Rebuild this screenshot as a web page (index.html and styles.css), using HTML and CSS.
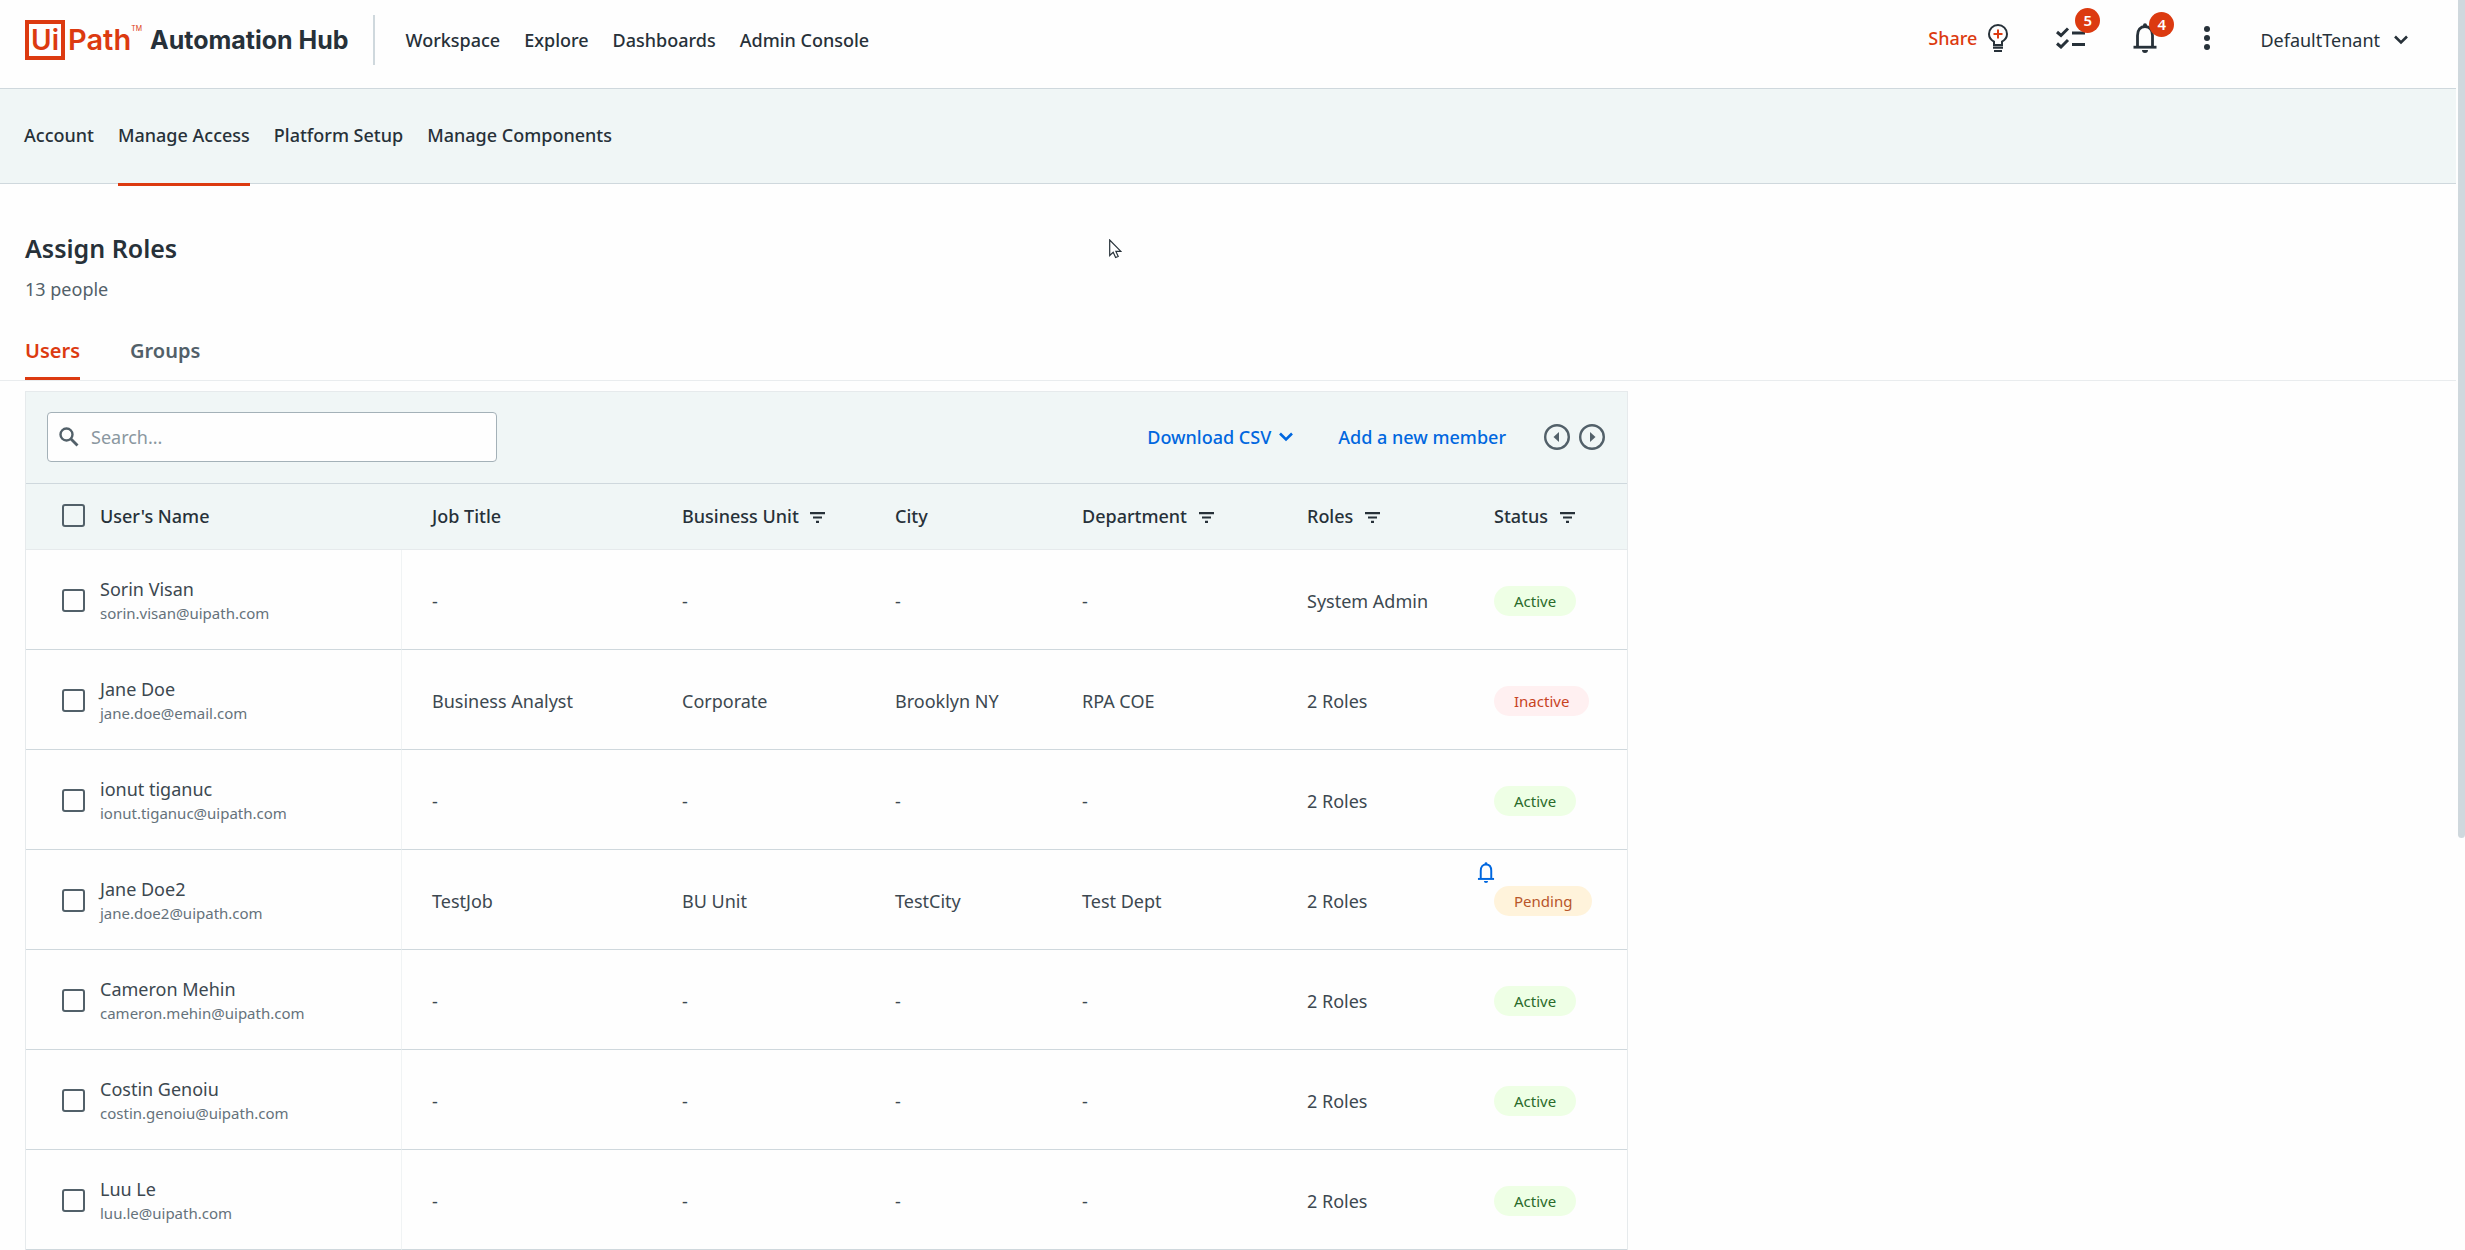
FILE: index.html
```html
<!DOCTYPE html>
<html lang="en">
<head>
    <meta charset="UTF-8">
    <meta name="viewport" content="width=device-width, initial-scale=1.0">
    <title>Automation Hub - Assign Roles</title>
    <link rel="stylesheet" href="styles.css">
</head>
<body>

    <!-- shared icons -->
    <svg class="sprite" aria-hidden="true">
        <symbol id="chevron" viewBox="0 0 14 10">
            <path d="M1 1.5l6 6 6-6" fill="none" stroke="currentColor" stroke-width="2.6"/>
        </symbol>
        <symbol id="filter" viewBox="0 0 15 11">
            <path d="M0 1.1h15M3 5.5h9M6 9.9h3" fill="none" stroke="currentColor" stroke-width="2.2"/>
        </symbol>
        <symbol id="bell" viewBox="0 0 24 30">
            <path d="M4.500 23V12.500C4.500 7 7.500 3.500 12 3.500S19.500 7 19.500 12.500V23" fill="none" stroke="currentColor" stroke-width="2.8"/>
            <path d="M.5 24.200h23" stroke="currentColor" stroke-width="2.8"/>
            <path d="M10 4V2.200a2 2 0 0 1 4 0V4zM9 27h6a3 3 0 0 1-6 0z" fill="currentColor"/>
        </symbol>
    </svg>

    <header class="topbar">
        <a class="logo" href="#">
            <span class="logo-box">Ui</span><span class="logo-path">Path</span><sup class="logo-tm">TM</sup>
            <span class="logo-product">Automation Hub</span>
        </a>
        <nav class="main-nav">
            <a href="#">Workspace</a>
            <a href="#">Explore</a>
            <a href="#">Dashboards</a>
            <a href="#">Admin Console</a>
        </nav>
        <div class="tools">
            <a class="share" href="#">Share
                <svg width="22" height="30" viewBox="0 0 22 30">
                    <path d="M7 22v-3.300C4 17 2 14.500 2 11a9 9 0 0 1 18 0c0 3.500-2 6-5 7.700V22z" fill="none" stroke="#273139" stroke-width="2"/>
                    <path d="M6 24.700h10M7 28h8" stroke="#273139" stroke-width="2.2"/>
                    <path d="M11 6.500v9M6.500 11h9" stroke="#dc3a10" stroke-width="2"/>
                </svg>
            </a>
            <button class="icon-button tasks" aria-label="Tasks">
                <svg width="30" height="22" viewBox="0 0 30 22">
                    <path d="M1 5l4 3.500 7-7M1 16.500L5 20l7-7M16 6h13M16 17.500h13" fill="none" stroke="currentColor" stroke-width="3"/>
                </svg>
                <span class="count">5</span>
            </button>
            <button class="icon-button alerts" aria-label="Notifications">
                <svg width="24" height="30"><use href="#bell"/></svg>
                <span class="count">4</span>
            </button>
            <button class="icon-button more" aria-label="More">
                <svg width="8" height="24" viewBox="0 0 8 24" fill="currentColor">
                    <circle cx="4" cy="3" r="3"/><circle cx="4" cy="12" r="3"/><circle cx="4" cy="21" r="3"/>
                </svg>
            </button>
            <button class="tenant">DefaultTenant
                <svg width="14" height="10"><use href="#chevron"/></svg>
            </button>
        </div>
    </header>

    <nav class="sub-nav">
        <a href="#">Account</a>
        <a class="active" href="#">Manage Access</a>
        <a href="#">Platform Setup</a>
        <a href="#">Manage Components</a>
    </nav>

    <main>
        <div class="page-title">
            <h1>Assign Roles</h1>
            <p>13 people</p>
        </div>

        <div class="tabs">
            <button class="tab active">Users</button>
            <button class="tab">Groups</button>
        </div>

        <section class="panel">
            <div class="toolbar">
                <label class="search">
                    <svg width="20" height="20" viewBox="0 0 20 20">
                        <circle cx="7.500" cy="7.500" r="6" fill="none" stroke="currentColor" stroke-width="2.400"/>
                        <path d="M12 12l6.500 6.500" stroke="currentColor" stroke-width="2.800"/>
                    </svg>
                    <input type="text" placeholder="Search..." aria-label="Search">
                </label>
                <button class="link-button download">Download CSV
                    <svg width="14" height="10"><use href="#chevron"/></svg>
                </button>
                <button class="link-button">Add a new member</button>
                <div class="pager">
                    <button class="icon-button" aria-label="Previous">
                        <svg width="26" height="26" viewBox="0 0 26 26">
                            <circle cx="13" cy="13" r="11.800" fill="none" stroke="currentColor" stroke-width="2.400"/>
                            <path d="M15 8v10l-5.500-5z" fill="currentColor"/>
                        </svg>
                    </button>
                    <button class="icon-button" aria-label="Next">
                        <svg width="26" height="26" viewBox="0 0 26 26">
                            <circle cx="13" cy="13" r="11.800" fill="none" stroke="currentColor" stroke-width="2.400"/>
                            <path d="M11 8v10l5.500-5z" fill="currentColor"/>
                        </svg>
                    </button>
                </div>
            </div>

            <table>
                <colgroup>
                    <col class="col-name">
                    <col class="col-job">
                    <col class="col-unit">
                    <col class="col-city">
                    <col class="col-dept">
                    <col class="col-roles">
                    <col>
                </colgroup>
                <thead>
                    <tr>
                        <th><label class="user"><input type="checkbox"><span>User's Name</span></label></th>
                        <th>Job Title</th>
                        <th>Business Unit <svg class="filter" width="15" height="11"><use href="#filter"/></svg></th>
                        <th>City</th>
                        <th>Department <svg class="filter" width="15" height="11"><use href="#filter"/></svg></th>
                        <th>Roles <svg class="filter" width="15" height="11"><use href="#filter"/></svg></th>
                        <th>Status <svg class="filter" width="15" height="11"><use href="#filter"/></svg></th>
                    </tr>
                </thead>
                <tbody>
                    <tr>
                        <td><label class="user"><input type="checkbox"><span>Sorin Visan<small>sorin.visan@uipath.com</small></span></label></td>
                        <td>-</td>
                        <td>-</td>
                        <td>-</td>
                        <td>-</td>
                        <td>System Admin</td>
                        <td><span class="status">Active</span></td>
                    </tr>
                    <tr>
                        <td><label class="user"><input type="checkbox"><span>Jane Doe<small>jane.doe@email.com</small></span></label></td>
                        <td>Business Analyst</td>
                        <td>Corporate</td>
                        <td>Brooklyn NY</td>
                        <td>RPA COE</td>
                        <td>2 Roles</td>
                        <td><span class="status inactive">Inactive</span></td>
                    </tr>
                    <tr>
                        <td><label class="user"><input type="checkbox"><span>ionut tiganuc<small>ionut.tiganuc@uipath.com</small></span></label></td>
                        <td>-</td>
                        <td>-</td>
                        <td>-</td>
                        <td>-</td>
                        <td>2 Roles</td>
                        <td><span class="status">Active</span></td>
                    </tr>
                    <tr>
                        <td><label class="user"><input type="checkbox"><span>Jane Doe2<small>jane.doe2@uipath.com</small></span></label></td>
                        <td>TestJob</td>
                        <td>BU Unit</td>
                        <td>TestCity</td>
                        <td>Test Dept</td>
                        <td>2 Roles</td>
                        <td><span class="status pending">Pending<svg class="remind" width="18" height="21"><use href="#bell"/></svg></span></td>
                    </tr>
                    <tr>
                        <td><label class="user"><input type="checkbox"><span>Cameron Mehin<small>cameron.mehin@uipath.com</small></span></label></td>
                        <td>-</td>
                        <td>-</td>
                        <td>-</td>
                        <td>-</td>
                        <td>2 Roles</td>
                        <td><span class="status">Active</span></td>
                    </tr>
                    <tr>
                        <td><label class="user"><input type="checkbox"><span>Costin Genoiu<small>costin.genoiu@uipath.com</small></span></label></td>
                        <td>-</td>
                        <td>-</td>
                        <td>-</td>
                        <td>-</td>
                        <td>2 Roles</td>
                        <td><span class="status">Active</span></td>
                    </tr>
                    <tr>
                        <td><label class="user"><input type="checkbox"><span>Luu Le<small>luu.le@uipath.com</small></span></label></td>
                        <td>-</td>
                        <td>-</td>
                        <td>-</td>
                        <td>-</td>
                        <td>2 Roles</td>
                        <td><span class="status">Active</span></td>
                    </tr>
                </tbody>
            </table>
        </section>
    </main>

    <div class="scroll-thumb"></div>
    <svg class="pointer" width="13" height="20" viewBox="0 0 13 20">
        <path d="M.7 1v15.500l3.500-3.300 2.400 5.300 2.600-1.100-2.300-5h5z" fill="#fff" stroke="#273139" stroke-width="1.200"/>
    </svg>

</body>
</html>
```
FILE: styles.css
```css
* {
    box-sizing: border-box;
}
body {
    margin: 0;
    padding-right: 9px;
    font-family: "Noto Sans", sans-serif;
    font-size: 18px;
    line-height: 24px;
    color: #273139;
    background-color: #fefefe;
}
a {
    color: inherit;
    text-decoration: none;
}
button {
    padding: 0;
    border: none;
    background: none;
    font: inherit;
    color: inherit;
    cursor: pointer;
}
svg {
    display: block;
}
.sprite {
    position: absolute;
    width: 0;
    height: 0;
}

/* top bar */
.topbar {
    display: flex;
    align-items: center;
    height: 89px;
    padding: 0 48px 8px 25px;
    border-bottom: 1px solid #cfd8dd;
}
.logo {
    display: flex;
    align-items: center;
    height: 50px;
    padding-right: 24px;
    border-right: 2px solid #cfd8dd;
    font-family: Inter, sans-serif;
    font-weight: 600;
}
.logo-box {
    width: 40px;
    height: 40px;
    border: 4px solid #dc3a10;
    font-size: 28px;
    line-height: 32px;
    text-align: center;
    color: #dc3a10;
}
.logo-path {
    margin-left: 3px;
    font-size: 29px;
    color: #dc3a10;
}
.logo-tm {
    margin: 2px 0 0;
    align-self: flex-start;
    font-size: 7px;
    font-weight: 400;
    color: #dc3a10;
}
.logo-product {
    margin-left: 8px;
    font-size: 25px;
    font-weight: 700;
}
.main-nav {
    display: flex;
    gap: 24px;
    margin-left: 31px;
    font-weight: 500;
}
.tools {
    display: flex;
    align-items: center;
    margin-left: auto;
}
.share {
    display: flex;
    align-items: center;
    gap: 10px;
    margin-bottom: 4px;
    font-weight: 500;
    color: #dc3a10;
}
.icon-button {
    position: relative;
}
.tools .icon-button {
    margin-bottom: 4px;
}
.tasks {
    margin-left: 47px;
}
.alerts {
    margin-left: 47px;
}
.more {
    margin-left: 46px;
}
.count {
    position: absolute;
    top: -19px;
    right: -14px;
    width: 25px;
    height: 25px;
    border-radius: 50%;
    background-color: #dc3a10;
    font-size: 15px;
    font-weight: 600;
    line-height: 25px;
    text-align: center;
    color: #fff;
}
.alerts .count {
    top: -11px;
    right: -17px;
}
.tenant {
    display: flex;
    align-items: center;
    gap: 14px;
    margin-left: 49px;
}

/* second level navigation */
.sub-nav {
    display: flex;
    gap: 24px;
    height: 95px;
    padding-left: 24px;
    border-bottom: 1px solid #cfd8dd;
    background-color: #f0f6f6;
    font-weight: 500;
    line-height: 92px;
}
.sub-nav a {
    height: 97px;
}
.sub-nav .active {
    border-bottom: 3px solid #dc3a10;
}

/* page title and tabs */
.page-title {
    padding: 46px 25px 0;
}
h1 {
    margin: 0;
    font-size: 25px;
    font-weight: 600;
    line-height: 36px;
}
.page-title p {
    margin: 11px 0 0;
    color: #526069;
}
.tabs {
    display: flex;
    gap: 50px;
    height: 80px;
    padding: 24px 25px 0;
    border-bottom: 1px solid #e9ecee;
    font-size: 20px;
}
.tab {
    border-bottom: 3px solid transparent;
    font-weight: 600;
    color: #526069;
}
.tab.active {
    border-color: #dc3a10;
    color: #dc3a10;
}

/* users table */
.panel {
    max-width: 1603px;
    margin: 10px 25px 0;
    border: 1px solid #e6eaec;
    border-bottom: none;
}
.toolbar {
    display: flex;
    align-items: center;
    height: 92px;
    padding: 0 22px 2px 21px;
    border-bottom: 1px solid #cfd8dd;
    background-color: #f0f6f6;
}
.search {
    display: flex;
    align-items: center;
    gap: 10px;
    width: 450px;
    height: 50px;
    margin-right: auto;
    padding: 0 11px;
    border: 1px solid #a4b1b8;
    border-radius: 4px;
    background-color: #fefefe;
    color: #526069;
}
.search input {
    flex: 1;
    border: none;
    outline: none;
    background: none;
    font: inherit;
}
.search input::placeholder {
    color: #8a97a0;
}
.link-button {
    font-weight: 500;
    color: #0067df;
}
.download {
    display: flex;
    align-items: center;
    gap: 8px;
    margin-right: 45px;
}
.pager {
    display: flex;
    gap: 9px;
    margin-left: 38px;
    color: #526069;
}
table {
    width: 100%;
    border-collapse: separate;
    border-spacing: 0;
    table-layout: fixed;
}
.col-name { width: 376px; }
.col-job { width: 250px; }
.col-unit { width: 213px; }
.col-city { width: 187px; }
.col-dept { width: 225px; }
.col-roles { width: 187px; }
th, td {
    padding: 0 0 0 30px;
    text-align: left;
    white-space: nowrap;
}
th {
    height: 66px;
    padding-bottom: 2px;
    border-bottom: 1px solid #e6eaec;
    background-color: #f0f6f6;
    font-weight: 500;
}
td {
    height: 100px;
    padding-top: 2px;
    border-bottom: 1px solid #cfd8dd;
    color: #3c4850;
}
th:first-child, td:first-child {
    padding-left: 36px;
}
td:first-child {
    border-right: 1px solid #f0f3f4;
}
.user {
    display: flex;
    align-items: center;
    gap: 15px;
}
.user input {
    appearance: none;
    width: 23px;
    height: 23px;
    margin: 0;
    border: 2px solid #526069;
    border-radius: 3px;
}
.user small {
    display: block;
    font-size: 15px;
    color: #65727b;
}
.filter {
    display: inline-block;
    margin-left: 7px;
}
.status {
    position: relative;
    display: inline-block;
    padding: 0 20px;
    border-radius: 15px;
    background-color: #eeffe5;
    font-size: 15px;
    line-height: 30px;
    color: #2a6b2a;
}
.status.inactive {
    background-color: #fff0f1;
    color: #c8431f;
}
.status.pending {
    background-color: #fff3db;
    color: #b8562a;
}
.remind {
    position: absolute;
    top: -24px;
    left: -17px;
    color: #0067df;
}

.scroll-thumb {
    position: absolute;
    top: 0;
    right: 0;
    width: 7px;
    height: 67vh;
    border-radius: 0 0 4px 4px;
    background-color: #cfd8dd;
}
.pointer {
    position: absolute;
    top: 239px;
    left: 45%;
}
```
